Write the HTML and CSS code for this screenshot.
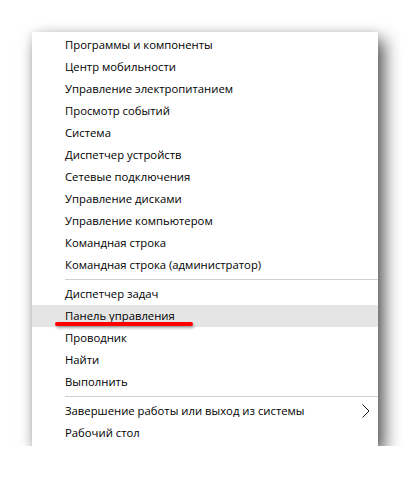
FILE: index.html
```html
<!DOCTYPE html>
<html>
<head>
<meta charset="utf-8">
<link rel="stylesheet" href="styles.css">
</head>
<body>
<div class="menu">
  <div class="item">Программы и компоненты</div>
  <div class="item">Центр мобильности</div>
  <div class="item">Управление электропитанием</div>
  <div class="item">Просмотр событий</div>
  <div class="item">Система</div>
  <div class="item">Диспетчер устройств</div>
  <div class="item">Сетевые подключения</div>
  <div class="item">Управление дисками</div>
  <div class="item">Управление компьютером</div>
  <div class="item">Командная строка</div>
  <div class="item">Командная строка (администратор)</div>
  <div class="sep"></div>
  <div class="item">Диспетчер задач</div>
  <div class="item active">Панель управления<span class="mark"></span></div>
  <div class="item">Проводник</div>
  <div class="item">Найти</div>
  <div class="item">Выполнить</div>
  <div class="sep"></div>
  <div class="item sub">Завершение работы или выход из системы
    <svg class="chev" width="8" height="14" viewBox="0 0 8 14"><path d="M0.5 0.5 L7 7 L0.5 13.5" fill="none" stroke="#1a1a1a" stroke-width="1"/></svg>
  </div>
  <div class="item">Рабочий стол</div>
</div>
</body>
</html>
```
FILE: styles.css
```css
html, body {
  margin: 0;
  padding: 0;
  background: #ffffff;
}
body {
  padding: 32px 0 0 32px;
  font-family: "Open Sans", "Noto Sans", sans-serif;
}
.menu {
  width: 346px;
  background: #ffffff;
  padding: 2px 0;
  box-sizing: border-box;
  box-shadow: 6px 8px 16px rgba(0, 0, 0, 0.68), -1px 0 8px rgba(0, 0, 0, 0.08);
}
.item {
  position: relative;
  height: 22px;
  line-height: 22px;
  padding-left: 33px;
  font-size: 11.3px;
  color: #000;
  white-space: nowrap;
  display: flex;
  align-items: center;
}
.item.active {
  background: #e5e5e5;
}
.sep {
  height: 1px;
  background: #cfcfcf;
  margin: 3px 0 3px 33px;
}
.sub {
  justify-content: space-between;
  padding-right: 8px;
}
.chev {
  display: block;
}
.mark {
  position: absolute;
  left: 23px;
  top: 17px;
  width: 138px;
  height: 4px;
  border-radius: 2px;
  background: #ff0000;
  box-shadow: 1px 2px 3px rgba(0, 0, 0, 0.35);
}
```
